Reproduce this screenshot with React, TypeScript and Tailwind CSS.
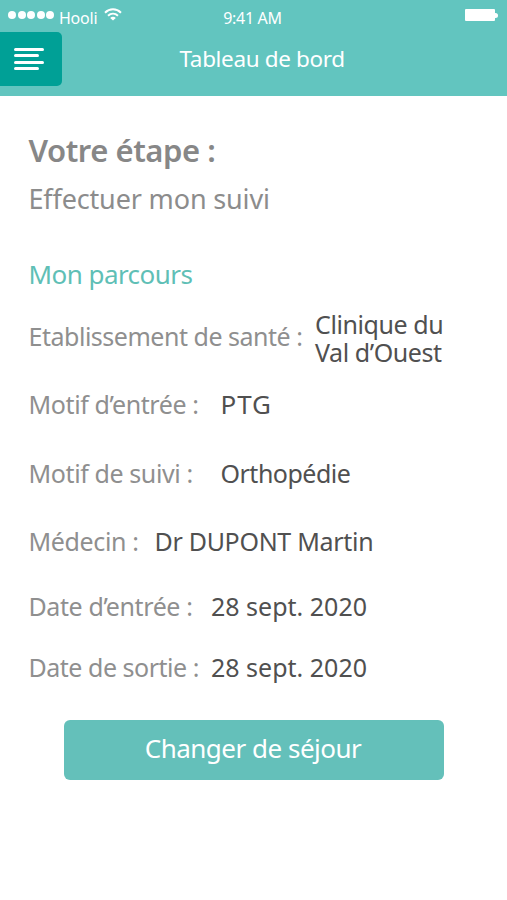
import React, { FC } from "react";
import clsx from "clsx";

interface IRowProps {
  label: string;
  value: React.ReactNode;
  rowClass: string;
  labelClass: string;
  valueClass?: string;
}

const StatusBar: FC = () => {
  return (
    <div className="h-8 grid grid-cols-3 text-[16px] leading-8">
      <div className="flex items-start pl-2">
        <div className="flex gap-[1.6px] pt-[11px]">
          {[1, 2, 3, 4, 5].map((dot) => (
            <span key={dot} className="size-2 rounded-full bg-white" />
          ))}
        </div>
        <span className="ml-[4.5px] pt-[2px] tracking-[-0.2px]">Hooli</span>
        <svg
          className="ml-[7px] mt-[8px] w-[18px] h-[13px]"
          viewBox="0 0 18 13"
          fill="none"
          stroke="white"
          strokeWidth="2"
        >
          <path d="M1 4.7C5.6.2 12.4.2 17 4.7" />
          <path d="M4 7.8c3-2.8 7-2.8 10 0" />
          <path d="M9 12.6 6.2 9.9c1.6-1.4 4-1.4 5.6 0z" fill="white" stroke="none" />
        </svg>
      </div>
      <p className="text-center pt-[2px] pr-[2px] tracking-[-0.3px]">9:41 AM</p>
      <div className="flex items-start justify-end pt-[9px] pr-[9px]">
        <span className="w-[30px] h-3 bg-white rounded-[1px]" />
        <span className="mt-[3.5px] w-[3px] h-[5px] bg-white rounded-r-full" />
      </div>
    </div>
  );
};

const Header: FC = () => {
  return (
    <header className="h-24 bg-[#62c5bf] text-white">
      <StatusBar />
      <div className="flex">
        <button className="w-[61.5px] h-[54px] shrink-0 rounded-r-[5px] bg-[#00a096] pl-[14px] flex flex-col justify-center gap-[3.6px]">
          <span className="w-[30px] h-[3px] rounded-full bg-white" />
          <span className="w-[25px] h-[3px] rounded-full bg-white" />
          <span className="w-[30px] h-[3px] rounded-full bg-white" />
          <span className="w-[25px] h-[3px] rounded-full bg-white" />
        </button>
        <h1 className="ml-[118px] text-[22.5px] leading-[53px] tracking-[-0.35px] whitespace-nowrap">
          Tableau de bord
        </h1>
      </div>
    </header>
  );
};

const InfoRow: FC<IRowProps> = ({
  label,
  value,
  rowClass,
  labelClass,
  valueClass,
}) => {
  return (
    <div className={clsx("flex items-center whitespace-nowrap", rowClass)}>
      <dt className={clsx("shrink-0 text-[#8f8f8f]", labelClass)}>{label}</dt>
      <dd className={clsx("text-[#505050]", valueClass)}>{value}</dd>
    </div>
  );
};

const App: FC = () => {
  return (
    <div className="w-[507px] h-[900px] overflow-hidden bg-white font-['Noto_Sans',sans-serif]">
      <Header />
      <main className="pt-[30px] pl-[28.5px]">
        <h2 className="text-[31px] leading-[48px] tracking-[-0.45px] font-semibold text-[#878787]">
          Votre étape :
        </h2>
        <p className="text-[27px] leading-[49px] tracking-[-0.15px] text-[#8c8c8c]">
          Effectuer mon suivi
        </p>
        <h3 className="mt-[27px] text-[26px] leading-[48px] tracking-[-0.55px] text-[#5fbfb6]">
          Mon parcours
        </h3>
        <dl className="mt-1 text-[25px] leading-[28px]">
          <InfoRow
            label="Etablissement de santé :"
            value={
              <>
                Clinique du
                <br />
                Val d’Ouest
              </>
            }
            rowClass="h-[68px]"
            labelClass="w-[286.5px] tracking-[-0.48px]"
            valueClass="pt-1 tracking-[-0.42px]"
          />
          <InfoRow
            label="Motif d’entrée :"
            value="PTG"
            rowClass="h-[67px]"
            labelClass="w-[192px] tracking-[-0.4px]"
            valueClass="text-[26px] tracking-[0.9px]"
          />
          <InfoRow
            label="Motif de suivi :"
            value="Orthopédie"
            rowClass="h-[71px]"
            labelClass="w-[192px] tracking-[-0.4px]"
            valueClass="tracking-[-0.5px]"
          />
          <InfoRow
            label="Médecin :"
            value="Dr DUPONT Martin"
            rowClass="h-[65px]"
            labelClass="w-[126px] tracking-[-0.35px]"
            valueClass="tracking-[-0.3px]"
          />
          <InfoRow
            label="Date d’entrée :"
            value="28 sept. 2020"
            rowClass="h-[66px]"
            labelClass="w-[182.5px] tracking-[-0.4px]"
          />
          <InfoRow
            label="Date de sortie :"
            value="28 sept. 2020"
            rowClass="h-[55px]"
            labelClass="w-[182.5px] tracking-[-0.48px]"
          />
        </dl>
        <button className="mt-[26px] ml-[35.5px] w-[380px] h-[59.5px] pr-[2px] pb-[3px] rounded-md bg-[#64c0ba] text-white text-[26px] tracking-[-0.5px]">
          Changer de séjour
        </button>
      </main>
    </div>
  );
};

export default App;
